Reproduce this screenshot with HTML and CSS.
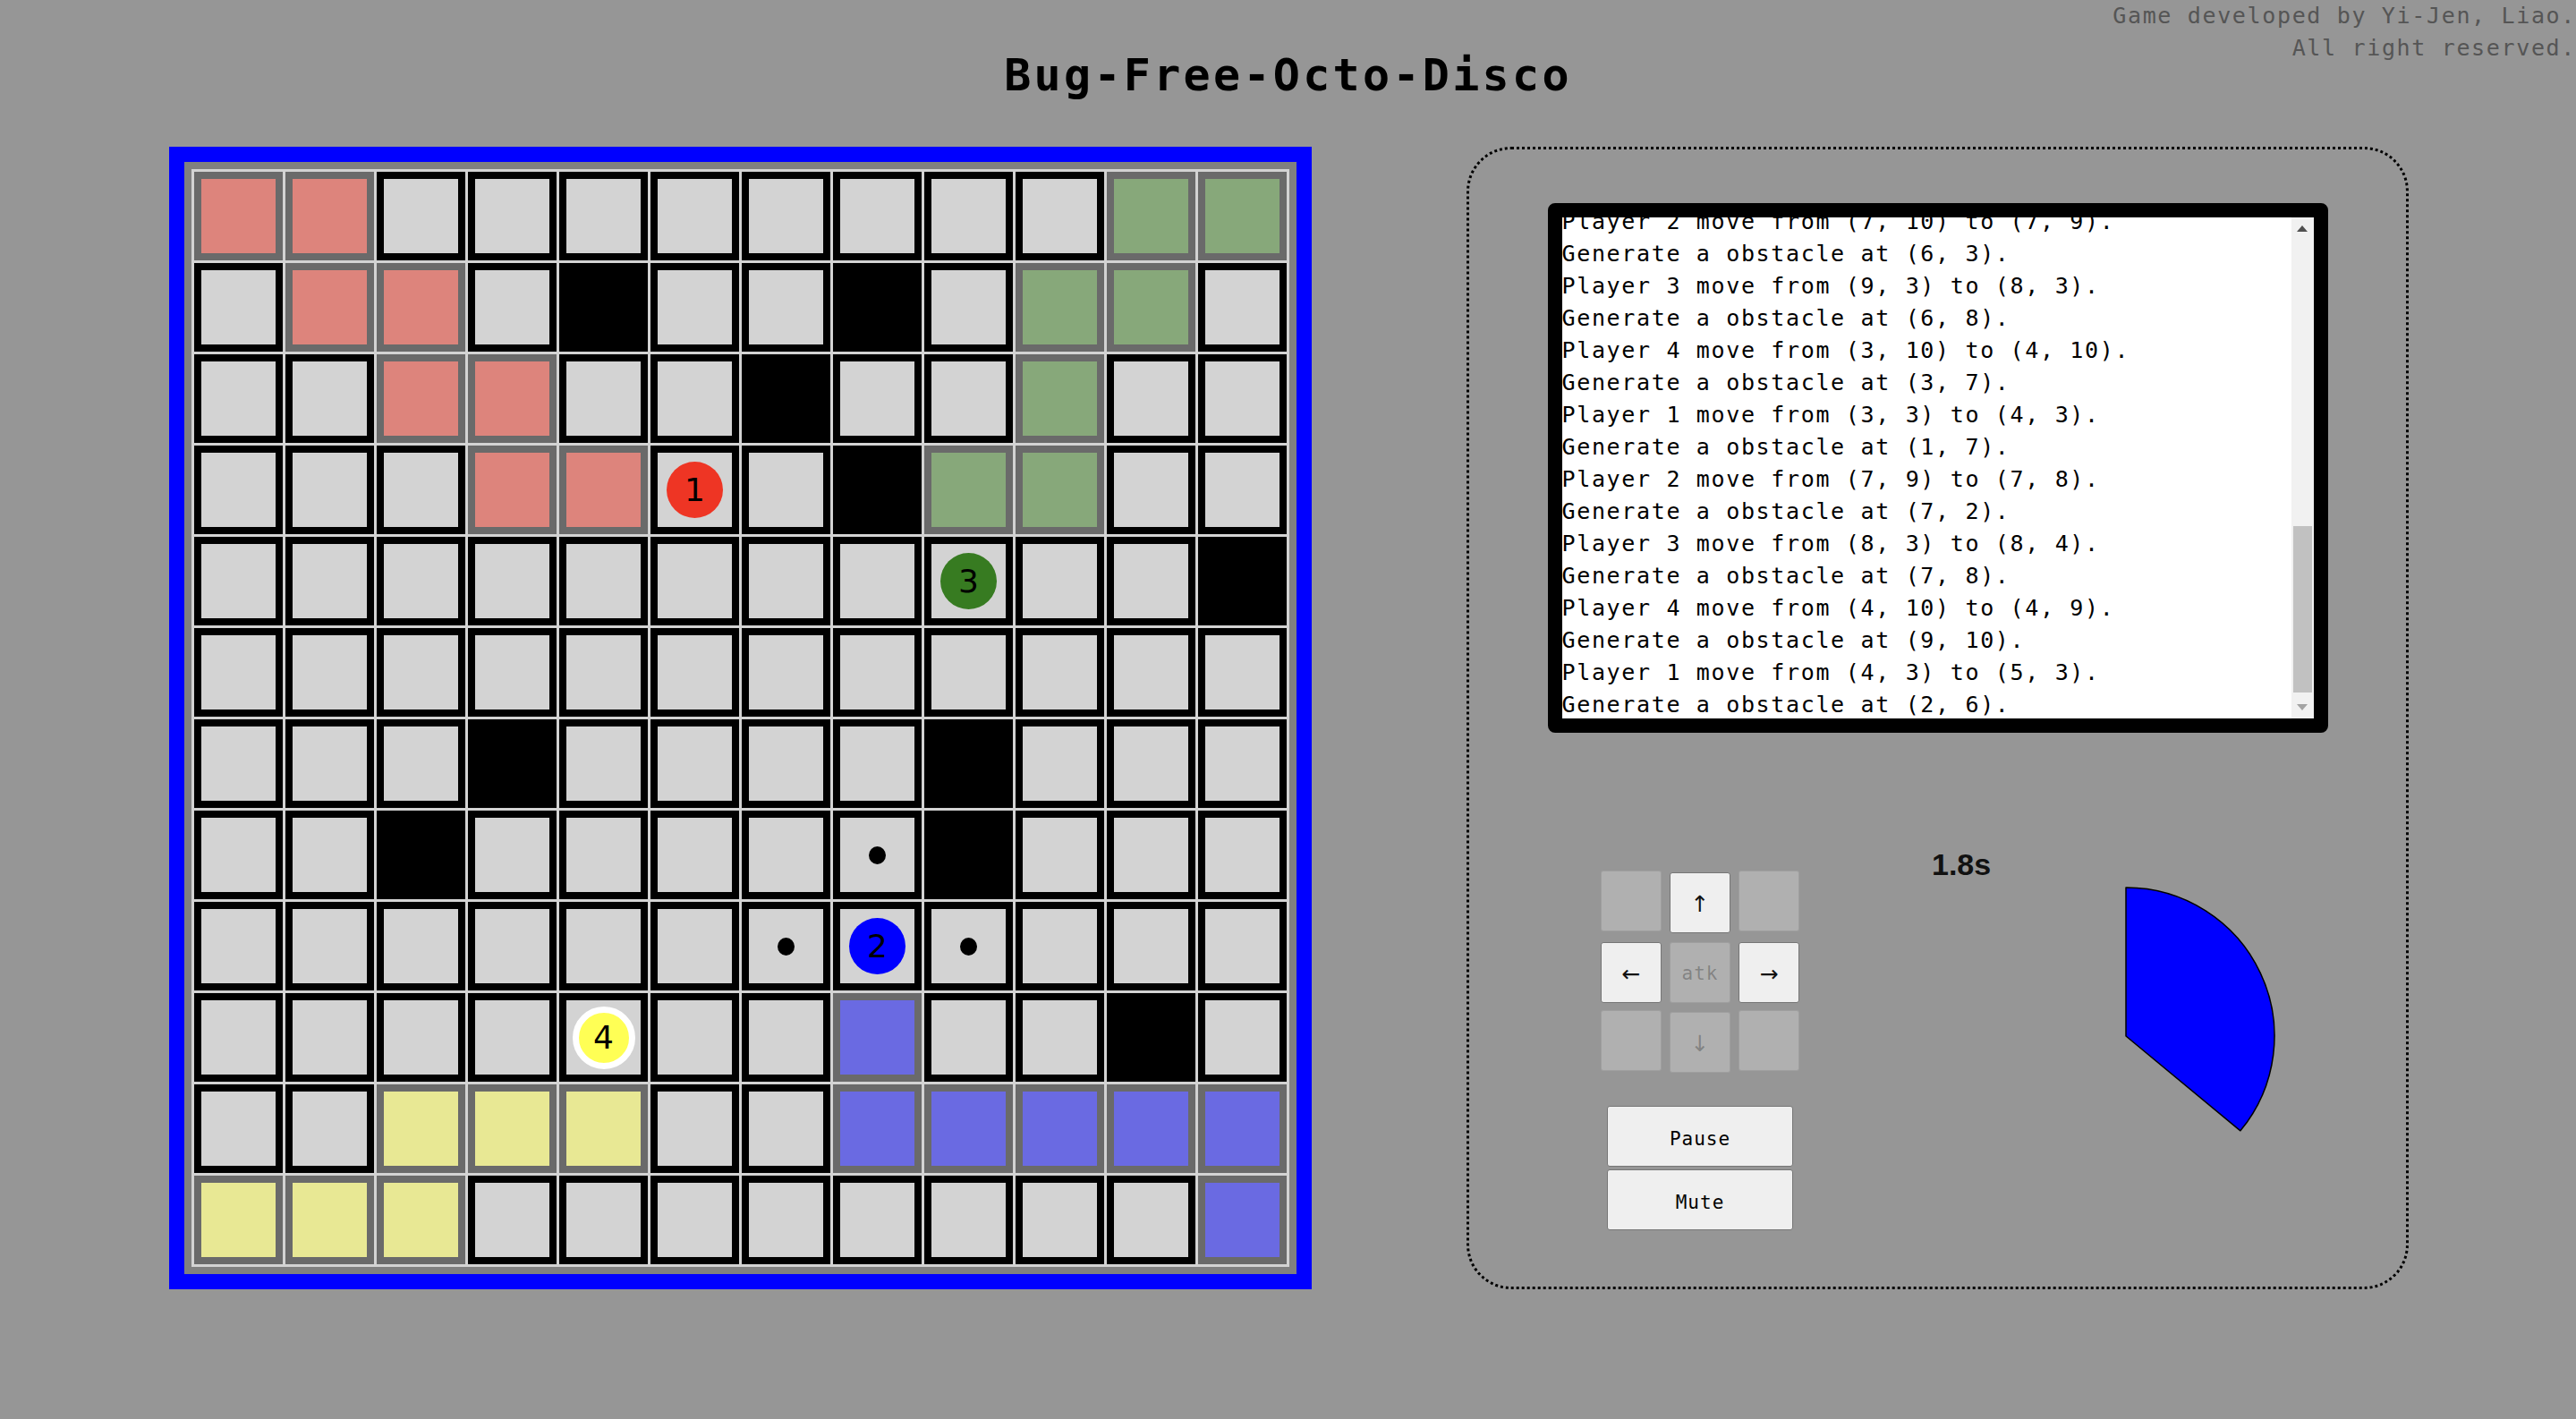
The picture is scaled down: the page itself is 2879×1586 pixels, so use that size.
FILE: index.html
```html
<!DOCTYPE html>
<html lang="en">
<head>
<meta charset="utf-8">
<title>Bug-Free-Octo-Disco</title>
<link rel="stylesheet" href="styles.css">
</head>
<body>
<div class="credits">Game developed by Yi-Jen, Liao.<br>All right reserved.</div>
<h1 class="title">Bug-Free-Octo-Disco</h1>
<main class="game">
  <div class="board-frame">
    <div class="board">
      <div class="cell red"></div><div class="cell red"></div><div class="cell"></div><div class="cell"></div><div class="cell"></div><div class="cell"></div><div class="cell"></div><div class="cell"></div><div class="cell"></div><div class="cell"></div><div class="cell grn"></div><div class="cell grn"></div>
      <div class="cell"></div><div class="cell red"></div><div class="cell red"></div><div class="cell"></div><div class="cell wall"></div><div class="cell"></div><div class="cell"></div><div class="cell wall"></div><div class="cell"></div><div class="cell grn"></div><div class="cell grn"></div><div class="cell"></div>
      <div class="cell"></div><div class="cell"></div><div class="cell red"></div><div class="cell red"></div><div class="cell"></div><div class="cell"></div><div class="cell wall"></div><div class="cell"></div><div class="cell"></div><div class="cell grn"></div><div class="cell"></div><div class="cell"></div>
      <div class="cell"></div><div class="cell"></div><div class="cell"></div><div class="cell red"></div><div class="cell red"></div><div class="cell"><span class="player p1">1</span></div><div class="cell"></div><div class="cell wall"></div><div class="cell grn"></div><div class="cell grn"></div><div class="cell"></div><div class="cell"></div>
      <div class="cell"></div><div class="cell"></div><div class="cell"></div><div class="cell"></div><div class="cell"></div><div class="cell"></div><div class="cell"></div><div class="cell"></div><div class="cell"><span class="player p3">3</span></div><div class="cell"></div><div class="cell"></div><div class="cell wall"></div>
      <div class="cell"></div><div class="cell"></div><div class="cell"></div><div class="cell"></div><div class="cell"></div><div class="cell"></div><div class="cell"></div><div class="cell"></div><div class="cell"></div><div class="cell"></div><div class="cell"></div><div class="cell"></div>
      <div class="cell"></div><div class="cell"></div><div class="cell"></div><div class="cell wall"></div><div class="cell"></div><div class="cell"></div><div class="cell"></div><div class="cell"></div><div class="cell wall"></div><div class="cell"></div><div class="cell"></div><div class="cell"></div>
      <div class="cell"></div><div class="cell"></div><div class="cell wall"></div><div class="cell"></div><div class="cell"></div><div class="cell"></div><div class="cell"></div><div class="cell"><span class="dot"></span></div><div class="cell wall"></div><div class="cell"></div><div class="cell"></div><div class="cell"></div>
      <div class="cell"></div><div class="cell"></div><div class="cell"></div><div class="cell"></div><div class="cell"></div><div class="cell"></div><div class="cell"><span class="dot"></span></div><div class="cell"><span class="player p2">2</span></div><div class="cell"><span class="dot"></span></div><div class="cell"></div><div class="cell"></div><div class="cell"></div>
      <div class="cell"></div><div class="cell"></div><div class="cell"></div><div class="cell"></div><div class="cell"><span class="player p4">4</span></div><div class="cell"></div><div class="cell"></div><div class="cell blu"></div><div class="cell"></div><div class="cell"></div><div class="cell wall"></div><div class="cell"></div>
      <div class="cell"></div><div class="cell"></div><div class="cell yel"></div><div class="cell yel"></div><div class="cell yel"></div><div class="cell"></div><div class="cell"></div><div class="cell blu"></div><div class="cell blu"></div><div class="cell blu"></div><div class="cell blu"></div><div class="cell blu"></div>
      <div class="cell yel"></div><div class="cell yel"></div><div class="cell yel"></div><div class="cell"></div><div class="cell"></div><div class="cell"></div><div class="cell"></div><div class="cell"></div><div class="cell"></div><div class="cell"></div><div class="cell"></div><div class="cell blu"></div>
    </div>
  </div>

  <section class="panel">
    <div class="log">
      <div class="log-text">
        <div class="log-line">Player 2 move from (7, 10) to (7, 9).</div>
        <div class="log-line">Generate a obstacle at (6, 3).</div>
        <div class="log-line">Player 3 move from (9, 3) to (8, 3).</div>
        <div class="log-line">Generate a obstacle at (6, 8).</div>
        <div class="log-line">Player 4 move from (3, 10) to (4, 10).</div>
        <div class="log-line">Generate a obstacle at (3, 7).</div>
        <div class="log-line">Player 1 move from (3, 3) to (4, 3).</div>
        <div class="log-line">Generate a obstacle at (1, 7).</div>
        <div class="log-line">Player 2 move from (7, 9) to (7, 8).</div>
        <div class="log-line">Generate a obstacle at (7, 2).</div>
        <div class="log-line">Player 3 move from (8, 3) to (8, 4).</div>
        <div class="log-line">Generate a obstacle at (7, 8).</div>
        <div class="log-line">Player 4 move from (4, 10) to (4, 9).</div>
        <div class="log-line">Generate a obstacle at (9, 10).</div>
        <div class="log-line">Player 1 move from (4, 3) to (5, 3).</div>
        <div class="log-line last">Generate a obstacle at (2, 6).</div>
      </div>
      <div class="scrollbar">
        <div class="sb-btn"><span class="tri-up"></span></div>
        <div class="sb-track"><div class="sb-thumb"></div></div>
        <div class="sb-btn"><span class="tri-down"></span></div>
      </div>
    </div>

    <div class="controls">
      <div class="left-col">
        <div class="pad">
          <button class="key" disabled></button>
          <button class="key arrow txt">↑</button>
          <button class="key" disabled></button>
          <button class="key arrow txt">←</button>
          <button class="key txt" disabled>atk</button>
          <button class="key arrow txt">→</button>
          <button class="key" disabled></button>
          <button class="key arrow txt" disabled>↓</button>
          <button class="key" disabled></button>
        </div>
        <button class="wide pause">Pause</button>
        <button class="wide mute">Mute</button>
      </div>
      <div class="right-col">
        <div class="timer">1.8s</div>
        <svg class="pie" width="345" height="345" viewBox="0 0 345 345">
          <path d="M171 171 L171 5 A166 166 0 0 1 298.9 276.8 Z" fill="#0000ff" stroke="#000" stroke-width="1.5" stroke-linejoin="round"/>
        </svg>
      </div>
    </div>
  </section>
</main>
</body>
</html>
```
FILE: styles.css
```css
html, body {
  margin: 0;
  padding: 0;
}
body {
  background: #969696;
  width: 2879px;
  height: 1586px;
  position: relative;
  overflow: hidden;
  font-family: "DejaVu Sans Mono", monospace;
}
.credits {
  position: absolute;
  top: 0;
  right: 0;
  text-align: right;
  font-size: 25px;
  letter-spacing: 1.65px;
  line-height: 36px;
  color: #555;
}
.title {
  margin: 0;
  padding-top: 54px;
  text-align: center;
  font-size: 50px;
  letter-spacing: 3.3px;
  line-height: 60px;
  font-weight: bold;
  color: #000;
}
.game {
  display: flex;
  align-items: stretch;
  margin-top: 50px;
  padding-left: 189px;
  gap: 173px;
}
.board-frame {
  border: 17px solid #0000ff;
}
.board {
  display: grid;
  grid-template-columns: repeat(12, 99px);
  grid-auto-rows: 99px;
  gap: 3px;
  padding: 3px;
  background: #d3d3d3;
  border: 8px solid #808080;
}
.cell {
  box-sizing: border-box;
  border: 8px solid #000;
  background: #d3d3d3;
  display: flex;
  align-items: center;
  justify-content: center;
}
.cell.wall { background: #000; }
.cell.red { border-color: #6a6a6a; background: #dd847c; }
.cell.grn { border-color: #6a6a6a; background: #87a87a; }
.cell.yel { border-color: #6a6a6a; background: #e8e894; }
.cell.blu { border-color: #6a6a6a; background: #6a6ae2; }

.player {
  width: 63px;
  height: 63px;
  border-radius: 50%;
  display: flex;
  align-items: center;
  justify-content: center;
  font-family: "DejaVu Sans", sans-serif;
  font-size: 36px;
  color: #000;
  line-height: 1;
}
.p1 { background: #ee3524; }
.p2 { background: #0000ff; }
.p3 { background: #377b21; }
.p4 {
  box-sizing: border-box;
  width: 70px;
  height: 70px;
  background: #ffff55;
  border: 7px solid #fff;
}
.dot {
  width: 19px;
  height: 20px;
  border-radius: 50%;
  background: #000;
}

.panel {
  box-sizing: border-box;
  width: 1053px;
  border: 3px dotted #000;
  border-radius: 50px;
  padding-top: 60px;
}
.log {
  box-sizing: border-box;
  width: 872px;
  height: 592px;
  margin: 0 auto;
  border: 16px solid #000;
  border-radius: 8px;
  background: #fff;
  display: flex;
}
.log-text {
  flex: 1;
  overflow: hidden;
  display: flex;
  flex-direction: column;
  justify-content: flex-end;
  font-size: 25px;
  letter-spacing: 1.65px;
  line-height: 36px;
  color: #000;
  white-space: pre;
}
.log-line { flex-shrink: 0; }
.log-line.last { margin-bottom: -3px; }
.scrollbar {
  width: 25px;
  display: flex;
  flex-direction: column;
  background: #f1f1f1;
}
.sb-btn {
  height: 25px;
  display: flex;
  align-items: center;
  justify-content: center;
}
.tri-up {
  width: 0;
  height: 0;
  border-left: 6px solid transparent;
  border-right: 6px solid transparent;
  border-bottom: 7px solid #505050;
}
.tri-down {
  width: 0;
  height: 0;
  border-left: 6px solid transparent;
  border-right: 6px solid transparent;
  border-top: 7px solid #a3a3a3;
}
.sb-track {
  flex: 1;
  display: flex;
  flex-direction: column;
  justify-content: flex-end;
  align-items: center;
  padding-bottom: 4px;
}
.sb-thumb {
  width: 21px;
  height: 186px;
  background: #c1c1c1;
}

.controls {
  display: flex;
  align-items: flex-start;
  margin-top: 127px;
}
.left-col {
  width: 222px;
  margin-left: 147px;
  padding-top: 27px;
  display: flex;
  flex-direction: column;
  align-items: center;
}
.pad {
  display: grid;
  grid-template-columns: repeat(3, 68px);
  grid-template-rows: repeat(3, 68px);
  column-gap: 9px;
  row-gap: 10px;
  align-items: start;
}
.key, .wide {
  box-sizing: border-box;
  margin: 0;
  padding: 0;
  background: #efefef;
  border: 1px solid #767676;
  border-radius: 3px;
  color: #000;
  font-family: "DejaVu Sans Mono", monospace;
  font-size: 21px;
  letter-spacing: 1px;
}
.key {
  width: 68px;
  height: 68px;
  padding-top: 2px;
}
.key.txt { margin-top: 2px; }
.key.arrow {
  font-family: "DejaVu Sans", sans-serif;
  font-size: 25px;
  letter-spacing: 0;
  color: #111;
}
.key:disabled {
  background: rgba(239, 239, 239, 0.3);
  border-color: rgba(118, 118, 118, 0.3);
  color: rgba(16, 16, 16, 0.3);
}
.wide {
  width: 208px;
  height: 68px;
  padding-top: 6px;
}
.pause { margin-top: 39px; }
.mute { margin-top: 3px; }

.right-col {
  margin-left: 148px;
  display: flex;
  flex-direction: column;
}
.timer {
  font-family: "Liberation Sans", Arial, sans-serif;
  font-weight: bold;
  font-size: 34px;
  line-height: 40px;
  color: #111;
}
.pie {
  display: block;
  margin-left: 46px;
  margin-top: 1px;
}
```
